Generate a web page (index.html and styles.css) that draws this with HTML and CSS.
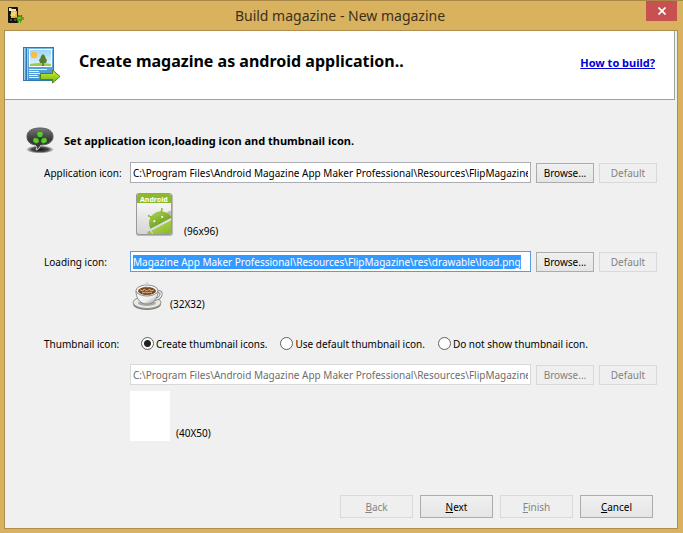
FILE: index.html
```html
<!DOCTYPE html>
<html lang="en">
<head>
<meta charset="utf-8">
<title>Build magazine - New magazine</title>
<link rel="stylesheet" href="styles.css">
</head>
<body>
<div class="window">
  <header class="titlebar">
    <svg class="app-icon" width="16" height="17" viewBox="0 0 16 17" aria-hidden="true">
      <rect x="0" y="0" width="10" height="16" rx="1" fill="#17130b"/>
      <path d="M1 1h2l1 1h4v3H6L4 4H1z" fill="#f4e9b0"/>
      <rect x="3" y="4" width="6" height="7" fill="#e9b640"/>
      <path d="M3 6h5M2 8h5" stroke="#fff3a5"/>
      <path d="M2 13h2M6 13h2" stroke="#8e8873"/>
      <path d="M9 10q3-4 5 0v4h-1v2h-1v-2h-1v2h-1v-2H9z" fill="#4b9d10"/>
      <path d="M8 10v3M15 10v3M10 8l1 2M14 8l-1 2" stroke="#347707"/>
      <path d="M10 11h3" stroke="#a5dc35"/>
    </svg>
    <h1 class="window-title">Build magazine - New magazine</h1>
    <button class="close" type="button" aria-label="Close">
      <svg width="8" height="8" viewBox="0 0 8 8"><path d="M.5.5l7 7M7.500.5l-7 7" stroke="#fff" stroke-width="1.700"/></svg>
    </button>
  </header>

  <main class="client">
    <section class="banner">
      <svg class="banner-icon" width="38" height="38" viewBox="0 0 38 38" aria-hidden="true">
        <defs>
          <linearGradient id="book" x2="0" y2="1"><stop stop-color="#75b9e6"/><stop offset="1" stop-color="#4292d0"/></linearGradient>
          <linearGradient id="sky" x2="0" y2="1"><stop stop-color="#9bd5f5"/><stop offset="1" stop-color="#e5f6fc"/></linearGradient>
          <linearGradient id="arrow" x2="0" y2="1"><stop stop-color="#c7ed36"/><stop offset="1" stop-color="#78b711"/></linearGradient>
        </defs>
        <rect x=".5" y="1.500" width="30" height="33" fill="url(#book)" stroke="#2e78b4"/>
        <path d="M3.500 2v32" stroke="#2e78b4"/><path d="M4.500 2v32M1.500 2v32" stroke="#9bd0f0"/>
        <rect x="6.500" y="3.500" width="22" height="17" fill="url(#sky)" stroke="#fff"/>
        <circle cx="11" cy="9" r="3.200" fill="#f8bd43"/>
        <path d="M7 18q10-2 21 0v2H7z" fill="#9ac956"/>
        <path d="M20 14v6" stroke="#8b5a2d" stroke-width="1.600"/>
        <path d="M20 8l2 2 .5 2 1.500 2-1 3h-6l-1-3 1.500-2 .5-2z" fill="#567d32"/>
        <path d="M6 23.500h18M6 25.500h10M6 27.500h11M6 29.500h9M6 31.500h10" stroke="#e6f6ff"/>
        <path d="M17.500 27.500h12v-3.500l7.500 6.500-7.500 6.500v-3.500h-12z" fill="url(#arrow)" stroke="#55870d"/>
      </svg>
      <h2 class="banner-title">Create magazine as android application..</h2>
      <a class="help" href="#">How to build?</a>
    </section>

    <form class="content">
      <div class="section-head">
        <svg width="28" height="28" viewBox="0 0 28 28" aria-hidden="true">
          <defs>
            <radialGradient id="shadow"><stop stop-color="#111"/><stop offset=".6" stop-color="#222" stop-opacity=".8"/><stop offset="1" stop-color="#222" stop-opacity="0"/></radialGradient>
            <linearGradient id="bubble" x2="0" y2="1"><stop stop-color="#777"/><stop offset=".5" stop-color="#3c3c3c"/><stop offset="1" stop-color="#333"/></linearGradient>
          </defs>
          <ellipse cx="14" cy="22.500" rx="14" ry="4" fill="url(#shadow)"/>
          <path d="M14 1C6 1 1 4 1 9.500c0 5 3 7.500 8 8.500 2 1 2 3 1 5 3-.5 4-2 5-5 7 0 12-3 12-8.500S22 1 14 1z" fill="url(#bubble)" stroke="#5a5a5a"/>
          <path d="M9 18q3 2 1 5 3-.5 5-5" fill="none" stroke="#ccc"/>
          <path d="M12 5h4l1 2-1.500 3h-3L11 7zM8 11l4 .5 1 3-2 2-3-1-1-2zM20 11l-4 .5-1 3 2 2 3-1 1-2z" fill="#57ce2b"/>
          <circle cx="14" cy="11.500" r="1.300" fill="#1c5a10"/>
        </svg>
        <h3 class="section-title">Set application icon,loading icon and thumbnail icon.</h3>
      </div>

      <div class="row">
        <label for="app-path">Application icon:</label>
        <input class="path" id="app-path" type="text" value="C:\Program Files\Android Magazine App Maker Professional\Resources\FlipMagazine">
        <button class="btn" type="button">Browse...</button>
        <button class="btn" type="button" disabled>Default</button>
      </div>
      <div class="preview preview-app">
        <svg width="48" height="48" viewBox="0 0 48 48" aria-hidden="true">
          <defs>
            <linearGradient id="paper" x2="0" y2="1"><stop stop-color="#fff"/><stop offset="1" stop-color="#d5d5d5"/></linearGradient>
            <linearGradient id="green" x2="0" y2="1"><stop stop-color="#a3cb45"/><stop offset="1" stop-color="#77a62a"/></linearGradient>
            <clipPath id="card"><rect x="7" y="3" width="34" height="40" rx="2"/></clipPath>
          </defs>
          <rect x="6" y="3" width="37" height="42" rx="3" fill="#777" opacity=".45"/>
          <rect x="6" y="2" width="36" height="42" rx="3" fill="#999"/>
          <g clip-path="url(#card)">
            <rect x="7" y="3" width="34" height="40" fill="url(#paper)"/>
            <rect x="7" y="3" width="34" height="9" fill="#8cba2c"/>
            <circle cx="40" cy="23" r="3" fill="#bbb"/>
            <g transform="translate(32 34) rotate(-28)" fill="url(#green)">
              <path d="M-12-2a12 12 0 0 1 24 0z"/>
              <path d="M-12 0h24v20h-24z"/>
              <rect x="-17" y="-1" width="4" height="14" rx="2"/>
              <path d="M-5-11l-3-4M5-11l3-4" stroke="#8ab633" stroke-width="1.500"/>
              <circle cx="-5" cy="-7" r="1" fill="#fff"/><circle cx="4" cy="-7" r="1" fill="#fff"/>
            </g>
          </g>
          <text class="card-text" x="10" y="11">Android</text>
        </svg>
        <span>(96x96)</span>
      </div>

      <div class="row">
        <label for="load-path">Loading icon:</label>
        <input class="path path-active" id="load-path" type="text" value="Magazine App Maker Professional\Resources\FlipMagazine\res\drawable\load.png">
        <button class="btn" type="button">Browse...</button>
        <button class="btn" type="button" disabled>Default</button>
      </div>
      <div class="preview preview-load">
        <svg width="32" height="32" viewBox="0 0 32 32" aria-hidden="true">
          <defs><linearGradient id="cup" x2="1" y2="1"><stop stop-color="#fff"/><stop offset=".6" stop-color="#eee"/><stop offset="1" stop-color="#888"/></linearGradient></defs>
          <ellipse cx="15" cy="24" rx="14" ry="6" fill="#777"/>
          <ellipse cx="15" cy="22.500" rx="14" ry="6" fill="#e9e9e4" stroke="#92928e"/>
          <ellipse cx="15" cy="23" rx="9" ry="3" fill="#aaa"/>
          <path d="M25 12q5-1 4 3-2 5-7 4" fill="none" stroke="#777" stroke-width="3"/>
          <path d="M25 12q5-1 4 3-2 5-7 4" fill="none" stroke="#eee" stroke-width="1.500"/>
          <path d="M4 11c0 6 3 13 11 13s11-7 11-13z" fill="url(#cup)" stroke="#8a8a86"/>
          <ellipse cx="15" cy="10.500" rx="11" ry="5.500" fill="#f7f7f3" stroke="#8a8a86"/>
          <ellipse cx="15" cy="11" rx="9" ry="4" fill="#75482a"/>
          <path d="M8 10l3 1 1-2 3 2 3-2 1 2 3-1M10 13l3-1 2 1 3-1 2 1" fill="none" stroke="#ddb47b"/>
          <path d="M14 7q-5-2 0-4 2-1 0-3 4 3 1 5 2 1 1 3" fill="#ccc" opacity=".7"/>
        </svg>
        <span>(32X32)</span>
      </div>

      <div class="row thumb-row" role="radiogroup" aria-labelledby="thumb-label">
        <span id="thumb-label">Thumbnail icon:</span>
        <div class="options">
          <label class="option"><input type="radio" name="thumb" checked>Create thumbnail icons.</label>
          <label class="option"><input type="radio" name="thumb">Use default thumbnail icon.</label>
          <label class="option"><input type="radio" name="thumb">Do not show thumbnail icon.</label>
        </div>
      </div>
      <div class="row">
        <span></span>
        <input class="path" aria-labelledby="thumb-label" type="text" disabled value="C:\Program Files\Android Magazine App Maker Professional\Resources\FlipMagazine">
        <button class="btn" type="button" disabled>Browse...</button>
        <button class="btn" type="button" disabled>Default</button>
      </div>
      <div class="preview preview-thumb">
        <div class="blank"></div>
        <span>(40X50)</span>
      </div>
    </form>

    <footer class="actions">
      <button class="btn" type="button" disabled><u>B</u>ack</button>
      <button class="btn" type="button"><u>N</u>ext</button>
      <button class="btn" type="button" disabled><u>F</u>inish</button>
      <button class="btn" type="button"><u>C</u>ancel</button>
    </footer>
  </main>
</div>
<script src="script.js"></script>
</body>
</html>
```
FILE: styles.css
```css
* { box-sizing: border-box; }

body {
  margin: 0;
  background: #d9b25f;
  color: #000;
  font: 10px/16px "Noto Sans", sans-serif;
}

h1, h2, h3 { margin: 0; }

.window {
  display: flex;
  flex-direction: column;
  min-height: 100vh;
  padding: 0 5px 4px 4px;
  border-top: 1px solid #a98848;
}

.titlebar {
  display: flex;
  align-items: center;
  height: 29px;
  padding-left: 4px;
}

.window-title {
  flex: 1;
  padding-left: 10px;
  color: #3d301a;
  font: 14px/20px "Segoe UI", "Noto Sans", sans-serif;
  text-align: center;
}

.close {
  display: flex;
  align-items: center;
  justify-content: center;
  align-self: flex-start;
  width: 31px;
  height: 20px;
  margin-right: 1px;
  padding: 0;
  border: 0;
  background: #c75050;
}

.client {
  display: flex;
  flex: 1;
  flex-direction: column;
  border: 1px solid #b08f4e;
  background: #f0f0f0;
}

.banner {
  display: flex;
  align-items: center;
  height: 69px;
  margin-right: 2px;
  padding: 0 19px 0 18px;
  border: 1px solid #a0a0a0;
  border-width: 0 1px 1px 0;
  background: #fff;
}

.banner-title {
  flex: 1;
  margin: 0 0 8px 18px;
  font: bold 16px/22px Tahoma, "Noto Sans", sans-serif;
}

.help {
  margin-bottom: 4px;
  color: #0000d8;
  font: bold 11px/16px Tahoma, "Noto Sans", sans-serif;
}

.content {
  flex: 1;
  padding: 26px 20px 0 21px;
}

.section-head {
  display: flex;
  align-items: center;
  gap: 10px;
  height: 30px;
  margin-bottom: 6px;
}

.section-title { font: bold 11px/16px Tahoma, "Noto Sans", sans-serif; }

.row {
  display: grid;
  grid-template-columns: 81px 1fr 58px 58px;
  align-items: center;
  column-gap: 5px;
  min-height: 21px;
  padding-left: 18px;
  white-space: nowrap;
}

.path {
  width: 100%;
  height: 21px;
  padding: 0 2px;
  border: 1px solid #abadb3;
  outline: 0;
  background: #fff;
  color: #000;
  font: inherit;
}

.path:disabled { border-color: #d9d9d9; color: #6d6d6d; }
.path-active { border-color: #569de5; }
.path::selection { background: #3399ff; color: #fff; }

.btn {
  height: 20px;
  padding: 0;
  border: 1px solid #acacac;
  background: linear-gradient(#f0f0f0, #e5e5e5);
  color: #000;
  font: inherit;
}

.btn:disabled {
  border-color: #d9d9d9;
  background: #efefef;
  color: #838383;
}

.preview {
  display: flex;
  align-items: flex-end;
  gap: 6px;
  padding-left: 104px;
}

.preview-app { height: 68px; padding-bottom: 12px; }
.preview-load { height: 61px; padding: 0 0 21px 106px; }
.preview-thumb { height: 56px; }
.blank { width: 40px; height: 50px; background: #fff; }
.card-text { fill: #fff; font: bold 7px/8px "Noto Sans", sans-serif; }

.thumb-row { grid-template-columns: 92px 1fr; margin-bottom: 10px; }
.options { display: flex; gap: 13px; }

.option {
  display: flex;
  align-items: center;
  gap: 2px;
}

.option input {
  width: 13px;
  height: 13px;
  margin: 0;
  border: 1px solid #606060;
  border-radius: 50%;
  appearance: none;
  background: #fff;
}

.option input:checked { background: radial-gradient(circle, #222 0 3px, #fff 4px); }

.actions {
  display: flex;
  justify-content: flex-end;
  gap: 7px;
  padding: 0 24px 10px;
}

.actions .btn { width: 73px; height: 23px; }
```
FILE: script.js
```js
const loadPath = document.getElementById("load-path");
loadPath.focus();
loadPath.select();
loadPath.scrollLeft = loadPath.scrollWidth;
```
